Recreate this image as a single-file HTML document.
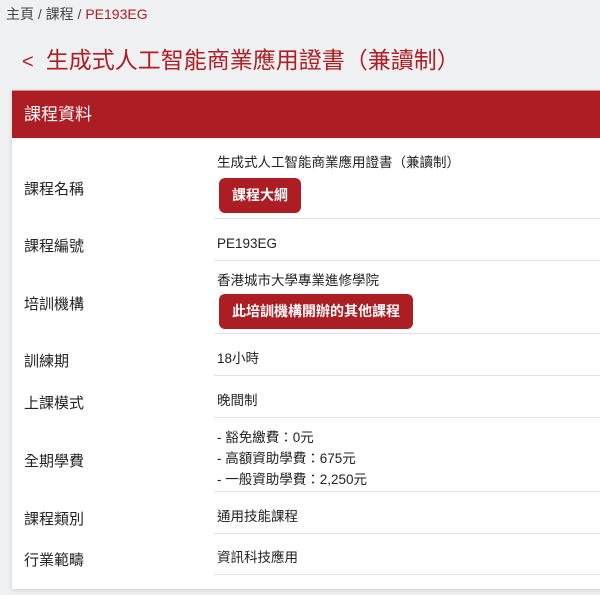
<!DOCTYPE html>
<html><head><meta charset="utf-8"><style>
body{margin:0;width:600px;height:595px;background:#eef0f2;font-family:"Liberation Sans","Noto Sans CJK TC",sans-serif;overflow:hidden;position:relative;color:#222}
.bc{position:absolute;left:6px;top:4px;font-size:14px;color:#444}
.bc span{color:#b01e23}
.title{position:absolute;left:22px;top:41px;font-size:23px;color:#b01e23;white-space:nowrap}
.title b{font-weight:normal;margin-right:12px;font-size:20px}
.card{position:absolute;left:12px;top:90px;width:600px;height:499px;background:#fff;box-shadow:0 1px 4px rgba(0,0,0,.15)}
.hd{height:47px;background:#ac1e24;color:#fff;font-size:17px;line-height:47px;padding-left:12px;border-top:1px solid #d88}
.l{position:absolute;left:12px;font-size:15px;color:#222}
.v{position:absolute;left:205px;font-size:13.5px;color:#222;line-height:21px}
.sep{position:absolute;left:202px;right:0;height:1px;background:#e3e3e3}
.btn{position:absolute;left:207px;background:#ac1e24;color:#fff;font-size:14px;border-radius:6px;height:35px;line-height:35px;padding:0 13px;font-weight:bold}
</style></head><body>
<div class="bc">主頁 / 課程 / <span>PE193EG</span></div>
<div class="title"><b>&lt;</b>生成式人工智能商業應用證書（兼讀制）</div>
<div class="card">
<div class="hd">課程資料</div>
<div class="l" style="top:88px">課程名稱</div>
<div class="v" style="top:62px">生成式人工智能商業應用證書（兼讀制）</div>
<div class="btn" style="top:88px">課程大綱</div>
<div class="sep" style="top:128px"></div>
<div class="l" style="top:145px">課程編號</div>
<div class="v" style="top:143px">PE193EG</div>
<div class="sep" style="top:170px"></div>
<div class="l" style="top:203px">培訓機構</div>
<div class="v" style="top:180px">香港城市大學專業進修學院</div>
<div class="btn" style="top:204px">此培訓機構開辦的其他課程</div>
<div class="sep" style="top:243px"></div>
<div class="l" style="top:260px">訓練期</div>
<div class="v" style="top:258px">18小時</div>
<div class="sep" style="top:285px"></div>
<div class="l" style="top:302px">上課模式</div>
<div class="v" style="top:300px">晚間制</div>
<div class="sep" style="top:327px"></div>
<div class="l" style="top:360px">全期學費</div>
<div class="v" style="top:337px">- 豁免繳費：0元<br>- 高額資助學費：675元<br>- 一般資助學費：2,250元</div>
<div class="sep" style="top:401px"></div>
<div class="l" style="top:418px">課程類別</div>
<div class="v" style="top:416px">通用技能課程</div>
<div class="sep" style="top:443px"></div>
<div class="l" style="top:459px">行業範疇</div>
<div class="v" style="top:457px">資訊科技應用</div>
<div class="sep" style="top:484px"></div>
</div>
</body></html>
